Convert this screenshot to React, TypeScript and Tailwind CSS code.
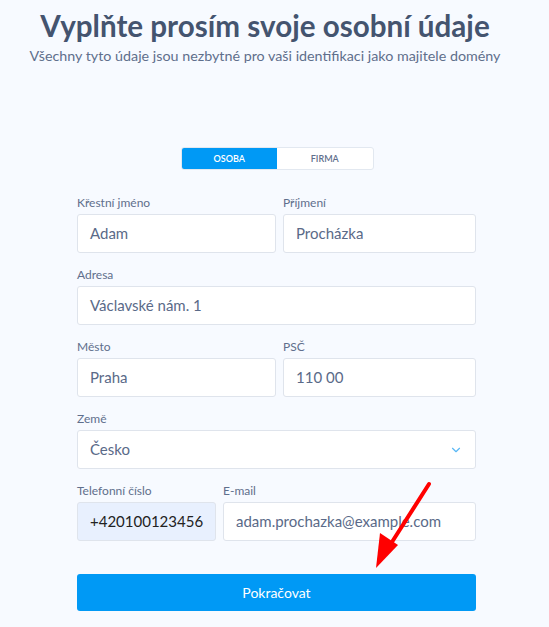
import { ChevronDown } from "lucide-react";

const font = { fontFamily: "Lato, 'Noto Sans', sans-serif" };

function Field({ label, value, className = "", inputClass = "" }: { label: string; value: string; className?: string; inputClass?: string }) {
  return (
    <div className={`flex flex-col ${className}`}>
      <label className="text-[12px] leading-[16px] text-[#5f6f8c] mb-[3px]">{label}</label>
      <div className={`h-[39px] rounded-[3px] border border-[#dfe4ec] flex items-center px-[12px] text-[15px] ${inputClass || "bg-white text-[#5a6a88]"}`}>
        {value}
      </div>
    </div>
  );
}

export default function App() {
  return (
    <div className="relative w-[549px] h-[627px] bg-[#f7faff] overflow-hidden" style={font}>
      <div className="flex flex-col items-center pt-[8px] pr-[19px]">
        <h1 className="text-[29.6px] leading-[36px] font-bold text-[#44546f] whitespace-nowrap">Vyplňte prosím svoje osobní údaje</h1>
        <p className="text-[14.3px] leading-[18px] text-[#5f6f8c] mt-[3px] whitespace-nowrap">Všechny tyto údaje jsou nezbytné pro vaši identifikaci jako majitele domény</p>
      </div>

      <div className="flex justify-center mt-[82px] pl-[5px]">
        <div className="flex w-[193px] h-[23px] rounded-[3px] border border-[#e2e8f0] bg-white overflow-hidden text-[9px] font-semibold">
          <div className="flex-1 flex items-center justify-center bg-[#0099f5] text-white">OSOBA</div>
          <div className="flex-1 flex items-center justify-center text-[#5f6f8c]">FIRMA</div>
        </div>
      </div>

      <div className="ml-[77px] w-[399px] mt-[25px] flex flex-col gap-[14px]">
        <div className="grid grid-cols-[199px_1fr] gap-[7px]">
          <Field label="Křestní jméno" value="Adam" />
          <Field label="Příjmení" value="Procházka" />
        </div>
        <Field label="Adresa" value="Václavské nám. 1" />
        <div className="grid grid-cols-[199px_1fr] gap-[7px]">
          <Field label="Město" value="Praha" />
          <Field label="PSČ" value="110 00" />
        </div>
        <div className="flex flex-col">
          <label className="text-[12px] leading-[16px] text-[#5f6f8c] mb-[3px]">Země</label>
          <div className="h-[39px] rounded-[3px] border border-[#dfe4ec] bg-white flex items-center justify-between px-[12px] text-[15px] text-[#5a6a88]">
            <span>Česko</span>
            <ChevronDown size={14} strokeWidth={2} className="text-[#5ab8f5]" />
          </div>
        </div>
        <div className="flex gap-[7px]">
          <Field label="Telefonní číslo" value="+420100123456" className="w-[139px]" inputClass="bg-[#e8f0fe] text-[#222]" />
          <Field label="E-mail" value="adam.prochazka@example.com" className="flex-1" />
        </div>
        <button className="mt-[19px] h-[37px] rounded-[3px] bg-[#0099f5] text-white text-[14px]">Pokračovat</button>
      </div>

      <svg className="absolute left-0 top-0 pointer-events-none" width="549" height="627">
        <line x1="429" y1="484" x2="392" y2="542" stroke="#ff0000" strokeWidth="4" strokeLinecap="round" />
        <polygon points="376,568 380,533 398,545" fill="#ff0000" />
      </svg>
    </div>
  );
}
